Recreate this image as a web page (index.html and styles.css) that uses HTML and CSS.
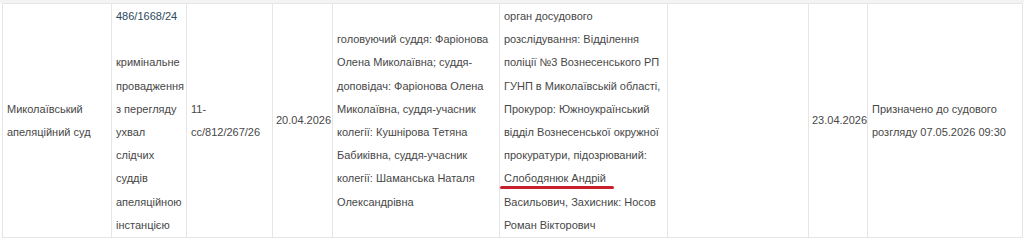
FILE: index.html
```html
<!DOCTYPE html>
<html lang="uk">
<head>
<meta charset="utf-8">
<title>Розклад</title>
<link rel="stylesheet" href="styles.css">
</head>
<body>
<div class="page">
<table class="cases">
  <colgroup>
    <col class="c-court">
    <col class="c-case">
    <col class="c-num">
    <col class="c-date">
    <col class="c-judges">
    <col class="c-parties">
    <col class="c-empty">
    <col class="c-date2">
    <col class="c-status">
  </colgroup>
  <tbody>
    <tr>
      <td>Миколаївський апеляційний суд</td>
      <td><a class="case-link" href="#">486/1668/24</a><div class="case-desc">кримінальне провадження з перегляду ухвал слідчих суддів апеляційною інстанцією</div></td>
      <td>11-сс/812/267/26</td>
      <td>20.04.2026</td>
      <td>головуючий суддя: Фаріонова Олена Миколаївна; суддя-доповідач: Фаріонова Олена Миколаївна, суддя-учасник колегії: Кушнірова Тетяна Бабиківна, суддя-учасник колегії: Шаманська Наталя Олександрівна</td>
      <td>орган досудового розслідування: Відділення поліції №3 Вознесенського РП ГУНП в Миколаївській області, Прокурор: Южноукраїнський відділ Вознесенської окружної прокуратури, підозрюваний: <span class="marked">Слободянюк Андрій</span> Васильович, Захисник: Носов Роман Вікторович</td>
      <td></td>
      <td>23.04.2026</td>
      <td>Призначено до судового розгляду 07.05.2026 09:30</td>
    </tr>
  </tbody>
</table>
</div>
</body>
</html>
```

FILE: styles.css
```css
html, body {
  margin: 0;
  padding: 0;
  background: #ffffff;
}

.page {
  padding: 3px 2px 0 2px;
  background: linear-gradient(#f3f3f3, #f3f3f3) top / 100% 3px no-repeat;
}

.cases {
  border-collapse: collapse;
  table-layout: fixed;
  width: 1020px;
  font-family: "Liberation Sans", Arial, sans-serif;
  font-size: 11px;
  line-height: 23.2px;
  color: #474747;
  background: #ffffff;
}

.cases td {
  border: 1px solid #e6e6e6;
  padding: 1px 4px 0 4px;
  vertical-align: middle;
  text-align: left;
}

.c-court { width: 109px; }
.c-case { width: 75px; }
.c-num { width: 86px; }
.c-date { width: 60px; }
.c-judges { width: 167px; }
.c-parties { width: 168px; }
.c-empty { width: 141px; }
.c-date2 { width: 59px; }
.c-status { width: 155px; }

.cases td:nth-child(4),
.cases td:nth-child(8) {
  padding-left: 3px;
  padding-right: 1px;
}

.case-link {
  color: #2c4a5e;
  text-decoration: none;
}

.case-desc {
  margin-top: 23.2px;
}

.marked {
  position: relative;
}

.marked::after {
  content: "";
  position: absolute;
  left: -4px;
  right: -8px;
  bottom: -5px;
  height: 3px;
  border-radius: 2px;
  background: #c8202c;
}
```
